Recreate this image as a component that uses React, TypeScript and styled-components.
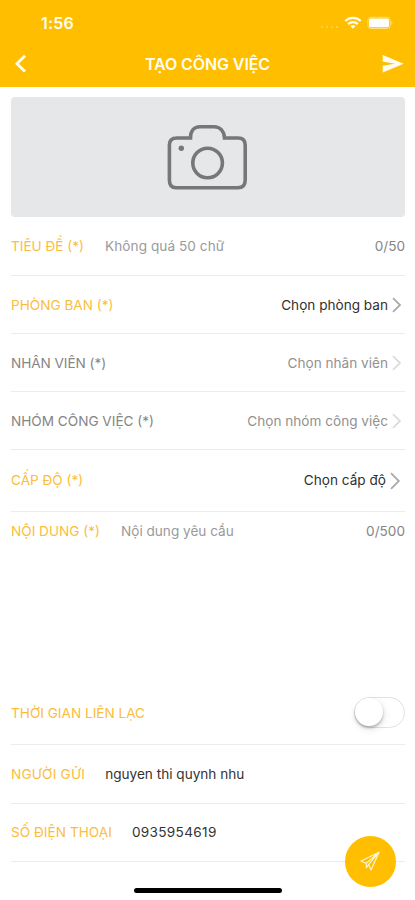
import React from 'react';
import styled, { createGlobalStyle } from 'styled-components';

const AMBER = '#ffbf00';

const GlobalStyle = createGlobalStyle`
  * { box-sizing: border-box; }
  body { margin: 0; background: #fff; font-family: Inter, 'Noto Sans', sans-serif; }
`;

const Screen = styled.main`
  position: relative;
  display: flex;
  flex-direction: column;
  width: 415px;
  height: 900px;
  overflow: hidden;
  background: #fff;
`;

const Header = styled.header`
  height: 86.5px;
  background: ${AMBER};
  color: #fffdf3;
`;

const StatusBar = styled.div`
  display: flex;
  align-items: center;
  justify-content: space-between;
  height: 46px;
  padding: 0 21px 0 41px;
`;

const Clock = styled.span`
  font-size: 16px;
  font-weight: 600;
  line-height: 20px;
  letter-spacing: 0.15px;
`;

const StatusIcons = styled.svg`
  display: block;
  width: 76px;
  height: 16px;
`;

const NavBar = styled.div`
  display: grid;
  grid-template-columns: 32px 1fr 32px;
  align-items: center;
  height: 36px;
  padding: 0 6px;
`;

const NavTitle = styled.h1`
  margin: 0;
  text-align: center;
  font-size: 16px;
  line-height: 24px;
  font-weight: 600;
  letter-spacing: -0.1px;
`;

const NavButton = styled.button`
  display: grid;
  place-items: center;
  height: 32px;
  padding: 0;
  border: 0;
  background: none;
  color: inherit;
  svg { display: block; }
`;

const PhotoPicker = styled.button`
  display: grid;
  place-items: center;
  flex: none;
  height: 120px;
  margin: 10.5px 10px 0 11px;
  padding: 0;
  border: 0;
  border-radius: 4px;
  background: #e6e7e8;
`;

const Form = styled.div`
  display: flex;
  flex-direction: column;
  padding: 0 10px 0 11px;
`;

const Row = styled.div<{ $height: number }>`
  display: flex;
  align-items: center;
  flex: none;
  height: ${(p) => p.$height}px;
  border-bottom: 1.5px solid #ececec;
`;

const ContentRow = styled(Row)`
  align-items: flex-start;
  padding-top: 9px;
  border-bottom: 0;
`;

const Text = styled.span<{ $track?: number }>`
  font-size: 13.6px;
  line-height: 20px;
  white-space: nowrap;
  letter-spacing: ${(p) => p.$track ?? 0}px;
`;

const Label = styled(Text)<{ $muted?: boolean }>`
  color: ${(p) => (p.$muted ? '#858585' : '#fbbd3c')};
`;

const Placeholder = styled(Text)`
  margin-left: 21px;
  color: #9a9a9a;
`;

const Value = styled(Text)`
  margin-left: 20px;
  color: #333;
`;

const Counter = styled(Text)`
  margin-left: auto;
  color: #858585;
`;

const Choice = styled(Text)<{ $muted?: boolean; $gap?: number }>`
  margin-left: auto;
  margin-right: ${(p) => p.$gap ?? 0}px;
  color: ${(p) => (p.$muted ? '#919191' : '#303030')};
`;

const Arrow = styled.svg<{ $muted?: boolean; $large?: boolean }>`
  flex: none;
  width: 17px;
  height: ${(p) => (p.$large ? 20 : 18)}px;
  fill: none;
  stroke: ${(p) => (p.$muted ? '#dcdcdc' : '#ababab')};
  stroke-width: 1.8;
`;

const Toggle = styled.div`
  width: 51px;
  height: 31px;
  margin-left: auto;
  border: 1.5px solid #e2e2e2;
  border-radius: 16px;
`;

const Knob = styled.div`
  width: 28px;
  height: 28px;
  border-radius: 50%;
  background: #fff;
  box-shadow: 0 2px 3px rgba(0, 0, 0, 0.25), 1px 3px 8px rgba(0, 0, 0, 0.1);
`;

const SendButton = styled.button`
  position: absolute;
  right: 19.5px;
  bottom: 13.5px;
  display: grid;
  place-items: center;
  width: 50.5px;
  height: 50.5px;
  padding: 0;
  border: 0;
  border-radius: 50%;
  background: ${AMBER};
`;

const HomeIndicator = styled.div`
  position: absolute;
  left: 134px;
  bottom: 7.5px;
  width: 148px;
  height: 5px;
  border-radius: 3px;
  background: #000;
`;

type ChoiceRowProps = {
  label: string;
  value: string;
  height: number;
  muted?: boolean;
  large?: boolean;
  labelTrack?: number;
  valueTrack?: number;
};

function ChoiceRow({ label, value, height, muted, large, labelTrack, valueTrack }: ChoiceRowProps) {
  return (
    <Row $height={height}>
      <Label $muted={muted} $track={labelTrack}>{label}</Label>
      <Choice $muted={muted} $track={valueTrack} $gap={large ? 2 : 0}>{value}</Choice>
      {large ? (
        <Arrow $large viewBox="0 0 17 20">
          <path d="M3 3.2 L10.8 11 L3 18.8" />
        </Arrow>
      ) : (
        <Arrow $muted={muted} viewBox="0 0 17 18">
          <path d="M5 2.2 L12 9 L5 15.8" />
        </Arrow>
      )}
    </Row>
  );
}

export default function App() {
  return (
    <Screen>
      <GlobalStyle />
      <Header>
        <StatusBar>
          <Clock>1:56</Clock>
          <StatusIcons viewBox="0 0 76 16">
            <g fill="#fff" opacity="0.3">
              <circle cx="4" cy="12" r="1.1" />
              <circle cx="9" cy="12" r="1.1" />
              <circle cx="14" cy="12" r="1.1" />
              <circle cx="19" cy="12" r="1.1" />
            </g>
            <g fill="none" stroke="#fffdf3" strokeWidth="2.2">
              <path d="M27.3 6 A11 11 0 0 1 42.7 6" />
              <path d="M30.2 9.1 A7 7 0 0 1 39.8 9.1" />
            </g>
            <path d="M32.4 11 Q35 8.8 37.6 11 L35 13.8 Z" fill="#fffdf3" />
            <rect x="49.8" y="2.3" width="22.4" height="11.2" rx="3" fill="none" stroke="#ffdf80" />
            <rect x="51" y="3.6" width="20" height="8.6" rx="1.6" fill="#fff" />
            <path d="M73.4 6 Q75.4 8 73.4 10 Z" fill="#ffdf80" />
          </StatusIcons>
        </StatusBar>
        <NavBar>
          <NavButton aria-label="Back">
            <svg width="20" height="20" viewBox="0 0 20 20" fill="none" stroke="currentColor" strokeWidth="2.8">
              <path d="M13 1.8 L5 9.7 L13 17.6" />
            </svg>
          </NavButton>
          <NavTitle>TẠO CÔNG VIỆC</NavTitle>
          <NavButton aria-label="Send">
            <svg width="22" height="20" viewBox="0 0 22 20" fill="currentColor">
              <path d="M0.7 1 L21.7 9.7 L0.7 18.4 L0.7 11.8 L13 9.7 L0.7 7.6 Z" />
            </svg>
          </NavButton>
        </NavBar>
      </Header>
      <PhotoPicker aria-label="Camera">
        <svg width="82" height="68" viewBox="0 0 82 68" fill="none" stroke="#777" strokeWidth="3.6">
          <path d="M10 15 H23.5 C23.5 8 27 3.8 33 3.8 H47 C53 3.8 57 8 57.5 15 H71 Q78.2 15 78.2 22 V57 Q78.2 64.7 71 64.7 H9 Q2.4 64.7 2.4 57 V22 Q2.4 15 10 15 Z" />
          <circle cx="40.6" cy="40" r="14.8" />
          <circle cx="14.3" cy="25.2" r="2.7" fill="#777" stroke="none" />
        </svg>
      </PhotoPicker>
      <Form>
        <Row $height={59}>
          <Label>TIÊU ĐỀ (*)</Label>
          <Placeholder $track={0.06}>Không quá 50 chữ</Placeholder>
          <Counter>0/50</Counter>
        </Row>
        <ChoiceRow label="PHÒNG BAN (*)" value="Chọn phòng ban" height={58} />
        <ChoiceRow label="NHÂN VIÊN (*)" value="Chọn nhân viên" height={58} muted labelTrack={-0.05} />
        <ChoiceRow label="NHÓM CÔNG VIỆC (*)" value="Chọn nhóm công việc" height={58} muted />
        <ChoiceRow label="CẤP ĐỘ (*)" value="Chọn cấp độ" height={61.5} large />
        <ContentRow $height={170}>
          <Label>NỘI DUNG (*)</Label>
          <Placeholder>Nội dung yêu cầu</Placeholder>
          <Counter>0/500</Counter>
        </ContentRow>
        <Row $height={63}>
          <Label>THỜI GIAN LIÊN LẠC</Label>
          <Toggle role="switch" aria-checked="false"><Knob /></Toggle>
        </Row>
        <Row $height={59}>
          <Label $track={0.22}>NGƯỜI GỬI</Label>
          <Value $track={0}>nguyen thi quynh nhu</Value>
        </Row>
        <Row $height={58}>
          <Label $track={0.03}>SỐ ĐIỆN THOẠI</Label>
          <Value $track={0.33}>0935954619</Value>
        </Row>
      </Form>
      <SendButton aria-label="Submit">
        <svg width="22" height="22" viewBox="0 0 22 22" fill="none" stroke="#fff6dc" strokeWidth="1.15" strokeLinejoin="round">
          <path d="M20 2.2 L2 11 L7.2 13.4 L20 2.2 L12 20 L9.6 14.6 L20 2.2 M7.2 13.4 L7.4 17.6 L9.6 14.6" />
        </svg>
      </SendButton>
      <HomeIndicator />
    </Screen>
  );
}
